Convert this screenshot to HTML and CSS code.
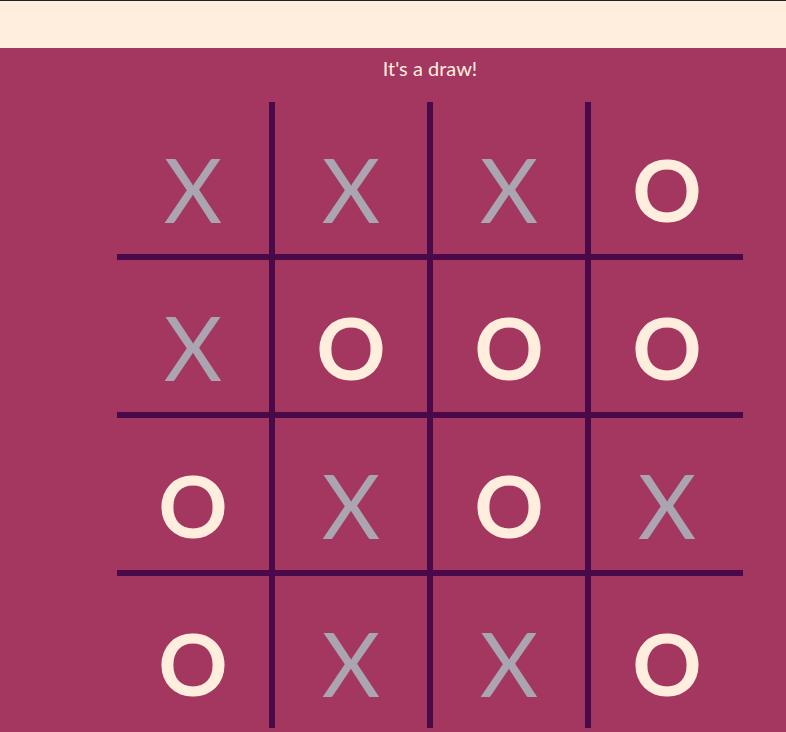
FILE: index.html
```html
<!DOCTYPE html>
<html>
<head>
<meta charset="utf-8">
<link rel="stylesheet" href="styles.css">
</head>
<body>
<header class="topbar"></header>
<main class="game">
  <p class="status">It's a draw!</p>
  <div class="board">
    <div class="cell x">X</div>
    <div class="cell x">X</div>
    <div class="cell x">X</div>
    <div class="cell o">O</div>
    <div class="cell x">X</div>
    <div class="cell o">O</div>
    <div class="cell o">O</div>
    <div class="cell o">O</div>
    <div class="cell o">O</div>
    <div class="cell x">X</div>
    <div class="cell o">O</div>
    <div class="cell x">X</div>
    <div class="cell o">O</div>
    <div class="cell x">X</div>
    <div class="cell x">X</div>
    <div class="cell o">O</div>
  </div>
</main>
</body>
</html>
```
FILE: styles.css
```css
html, body {
  margin: 0;
  padding: 0;
  overflow: hidden;
  background: #a3375f;
  font-family: Lato, "Open Sans", sans-serif;
}
.topbar {
  height: 47px;
  background: #ffeedd;
  border-top: 1px solid #222222;
}
.game {
  width: 626px;
  margin-left: 117px;
  display: flex;
  flex-direction: column;
  align-items: center;
}
.status {
  margin: 8px 0 0 0;
  height: 46px;
  font-size: 20px;
  line-height: 24px;
  color: #ffeedd;
}
.board {
  display: grid;
  grid-template-columns: repeat(4, 152px);
  grid-template-rows: repeat(4, 152px);
  gap: 6px;
  background: #4a0a4a;
}
.cell {
  background: #a3375f;
  display: flex;
  align-items: center;
  justify-content: center;
  padding-top: 20px;
  box-sizing: border-box;
  font-size: 90px;
  line-height: 1;
}
.x { color: #aba5b1; }
.o { color: #ffeedd; font-weight: 700; font-size: 86px; padding-top: 22px; }
```
